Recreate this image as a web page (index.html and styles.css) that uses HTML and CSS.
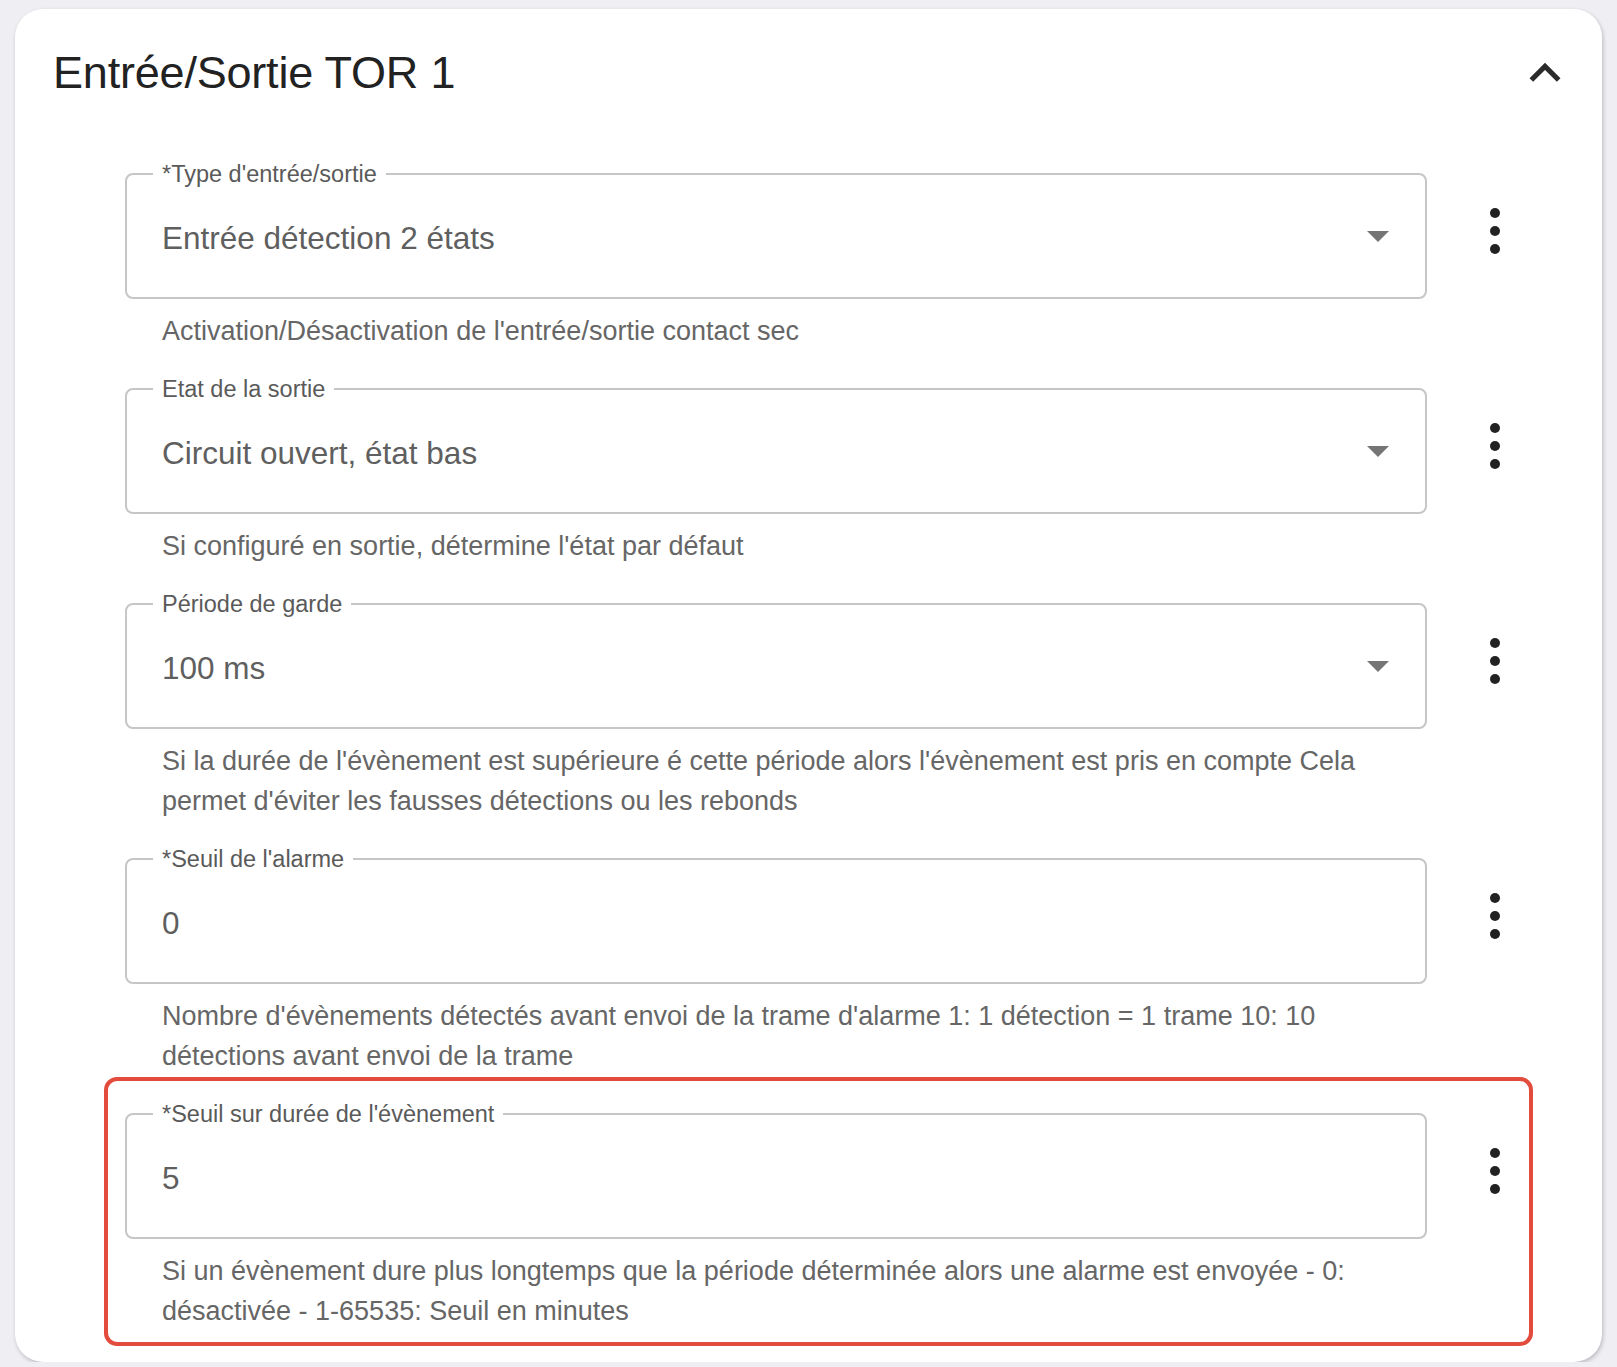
FILE: index.html
```html
<!DOCTYPE html>
<html lang="fr">
<head>
<meta charset="utf-8">
<title>Entrée/Sortie TOR 1</title>
<link rel="stylesheet" href="styles.css">
</head>
<body>
<section class="card">
  <header class="card-header">
    <h2 class="card-title">Entrée/Sortie TOR 1</h2>
    <button class="collapse-btn" aria-label="Réduire">
      <svg viewBox="0 0 24 24" width="62" height="62"><path d="M12 8l-6 6 1.41 1.41L12 10.83l4.59 4.58L18 14z" fill="#2b2b2b"/></svg>
    </button>
  </header>
  <div class="rows">
    <div class="row">
      <div class="field-col">
        <fieldset class="field">
          <legend class="field-label">*Type d'entrée/sortie</legend>
          <div class="field-input">
            <span class="field-value">Entrée détection 2 états</span>
            <svg class="drop" viewBox="0 0 22 11" width="22" height="11"><path d="M0 0h22L11 11z" fill="#757575"/></svg>
          </div>
        </fieldset>
        <p class="helper">Activation/Désactivation de l'entrée/sortie contact sec</p>
      </div>
      <div class="action-col"><button class="more-btn" aria-label="Plus"><svg viewBox="0 0 12 48" width="12" height="48"><circle cx="6" cy="6" r="5"/><circle cx="6" cy="24" r="5"/><circle cx="6" cy="42" r="5"/></svg></button></div>
    </div>
    <div class="row">
      <div class="field-col">
        <fieldset class="field">
          <legend class="field-label">Etat de la sortie</legend>
          <div class="field-input">
            <span class="field-value">Circuit ouvert, état bas</span>
            <svg class="drop" viewBox="0 0 22 11" width="22" height="11"><path d="M0 0h22L11 11z" fill="#757575"/></svg>
          </div>
        </fieldset>
        <p class="helper">Si configuré en sortie, détermine l'état par défaut</p>
      </div>
      <div class="action-col"><button class="more-btn" aria-label="Plus"><svg viewBox="0 0 12 48" width="12" height="48"><circle cx="6" cy="6" r="5"/><circle cx="6" cy="24" r="5"/><circle cx="6" cy="42" r="5"/></svg></button></div>
    </div>
    <div class="row">
      <div class="field-col">
        <fieldset class="field">
          <legend class="field-label">Période de garde</legend>
          <div class="field-input">
            <span class="field-value">100 ms</span>
            <svg class="drop" viewBox="0 0 22 11" width="22" height="11"><path d="M0 0h22L11 11z" fill="#757575"/></svg>
          </div>
        </fieldset>
        <p class="helper">Si la durée de l'évènement est supérieure é cette période alors l'évènement est pris en compte Cela permet d'éviter les fausses détections ou les rebonds</p>
      </div>
      <div class="action-col"><button class="more-btn" aria-label="Plus"><svg viewBox="0 0 12 48" width="12" height="48"><circle cx="6" cy="6" r="5"/><circle cx="6" cy="24" r="5"/><circle cx="6" cy="42" r="5"/></svg></button></div>
    </div>
    <div class="row">
      <div class="field-col">
        <fieldset class="field">
          <legend class="field-label">*Seuil de l'alarme</legend>
          <div class="field-input">
            <span class="field-value">0</span>
          </div>
        </fieldset>
        <p class="helper">Nombre d'évènements détectés avant envoi de la trame d'alarme 1: 1 détection = 1 trame 10: 10 détections avant envoi de la trame</p>
      </div>
      <div class="action-col"><button class="more-btn" aria-label="Plus"><svg viewBox="0 0 12 48" width="12" height="48"><circle cx="6" cy="6" r="5"/><circle cx="6" cy="24" r="5"/><circle cx="6" cy="42" r="5"/></svg></button></div>
    </div>
    <div class="row highlight">
      <div class="field-col">
        <fieldset class="field">
          <legend class="field-label">*Seuil sur durée de l'évènement</legend>
          <div class="field-input">
            <span class="field-value">5</span>
          </div>
        </fieldset>
        <p class="helper">Si un évènement dure plus longtemps que la période déterminée alors une alarme est envoyée - 0: désactivée - 1-65535: Seuil en minutes</p>
      </div>
      <div class="action-col"><button class="more-btn" aria-label="Plus"><svg viewBox="0 0 12 48" width="12" height="48"><circle cx="6" cy="6" r="5"/><circle cx="6" cy="24" r="5"/><circle cx="6" cy="42" r="5"/></svg></button></div>
    </div>
  </div>
</section>
</body>
</html>
```

FILE: styles.css
```css
* { box-sizing: border-box; }

html, body {
  margin: 0;
  padding: 0;
  background: #eeeef3;
  font-family: "Liberation Sans", Arial, sans-serif;
}

.card {
  margin: 9px 0 0 15px;
  width: 1587px;
  height: 1353px;
  background: #ffffff;
  border-radius: 28px;
  box-shadow: 1px 2px 4px rgba(0, 0, 0, 0.22);
}

.card-header {
  height: 124px;
  display: flex;
  align-items: center;
  justify-content: space-between;
  padding: 3px 26px 0 38px;
}

.card-title {
  margin: 0;
  font-size: 45px;
  font-weight: 400;
  color: #222222;
  letter-spacing: -0.2px;
}

.collapse-btn {
  border: 0;
  background: none;
  padding: 0;
  width: 62px;
  height: 62px;
  display: flex;
}

.rows {
  padding: 29px 0 0 110px;
  display: flex;
  flex-direction: column;
  gap: 26px;
}

.row {
  display: flex;
  width: 1438px;
}

.row.highlight {
  position: relative;
}

.row.highlight::after {
  content: "";
  position: absolute;
  top: -25px;
  bottom: -15px;
  left: -21px;
  right: 30px;
  border: 4px solid #e34b3c;
  border-radius: 13px;
  pointer-events: none;
}

.field-col {
  width: 1302px;
}

.field {
  margin: 0;
  padding: 0 0 0 26px;
  border: 2px solid #c6c6c6;
  border-radius: 8px;
}

.field-label {
  padding: 0 9px;
  font-size: 23.5px;
  line-height: 24px;
  color: #5a5a5a;
}

.field-input {
  height: 111px;
  display: flex;
  align-items: center;
  justify-content: space-between;
  padding: 0 36px 7px 9px;
}

.field-value {
  font-size: 31.5px;
  color: #5f5f5f;
}

.drop {
  display: block;
  margin-top: -4px;
}

.helper {
  margin: 12px 37px 0 37px;
  font-size: 27px;
  line-height: 40px;
  color: #666666;
}

.action-col {
  width: 136px;
  display: flex;
  justify-content: center;
  padding-top: 45px;
  align-items: flex-start;
}

.more-btn {
  border: 0;
  background: none;
  padding: 0;
  width: 48px;
  height: 48px;
  display: flex;
  align-items: center;
  justify-content: center;
  fill: #222222;
}
```
